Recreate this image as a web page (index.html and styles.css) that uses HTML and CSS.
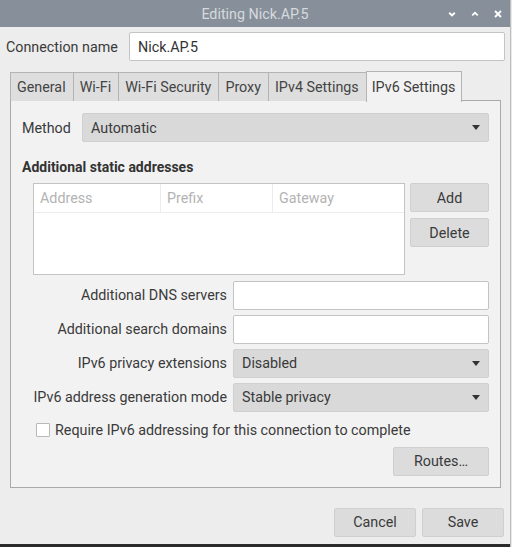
FILE: index.html
```html
<!DOCTYPE html>
<html>
<head>
<meta charset="utf-8">
<link rel="stylesheet" href="styles.css">
</head>
<body>
<div class="screen">
  <div class="window">
    <div class="titlebar">
      <span class="title">Editing Nick.AP.5</span>
      <div class="wm-buttons">
        <svg class="wm" viewBox="0 0 10 10"><path d="M2.2 3.8 L5 6.4 L7.8 3.8" fill="none" stroke="#fff" stroke-width="1.9"/></svg>
        <svg class="wm" viewBox="0 0 10 10"><path d="M2.2 6.4 L5 3.8 L7.8 6.4" fill="none" stroke="#fff" stroke-width="1.9"/></svg>
        <svg class="wm" viewBox="0 0 10 10"><path d="M2 2 L8 8 M8 2 L2 8" fill="none" stroke="#fff" stroke-width="1.9"/></svg>
      </div>
    </div>
    <div class="body">
      <div class="name-row">
        <span class="label">Connection name</span>
        <div class="entry name-entry">Nick.AP.5</div>
      </div>
      <div class="tabs">
        <div class="tab">General</div>
        <div class="tab">Wi-Fi</div>
        <div class="tab">Wi-Fi Security</div>
        <div class="tab">Proxy</div>
        <div class="tab">IPv4 Settings</div>
        <div class="tab active">IPv6 Settings</div>
      </div>
      <div class="panel">
        <div class="method-row">
          <span class="label">Method</span>
          <div class="combo method-combo"><span>Automatic</span><span class="arrow"></span></div>
        </div>
        <div class="heading">Additional static addresses</div>
        <div class="addr-row">
          <div class="table">
            <div class="thead">
              <div class="th c1">Address</div>
              <div class="th c2">Prefix</div>
              <div class="th c3">Gateway</div>
            </div>
          </div>
          <div class="side-buttons">
            <div class="button">Add</div>
            <div class="button">Delete</div>
          </div>
        </div>
        <div class="form">
          <span class="flabel">Additional DNS servers</span>
          <div class="entry"></div>
          <span class="flabel">Additional search domains</span>
          <div class="entry"></div>
          <span class="flabel">IPv6 privacy extensions</span>
          <div class="combo"><span>Disabled</span><span class="arrow"></span></div>
          <span class="flabel">IPv6 address generation mode</span>
          <div class="combo"><span>Stable privacy</span><span class="arrow"></span></div>
        </div>
        <div class="check-row">
          <span class="checkbox"></span>
          <span class="check-label">Require IPv6 addressing for this connection to complete</span>
        </div>
        <div class="routes-row">
          <div class="button routes">Routes…</div>
        </div>
      </div>
      <div class="dialog-buttons">
        <div class="button dlg">Cancel</div>
        <div class="button dlg">Save</div>
      </div>
    </div>
  </div>
  <div class="behind"></div>
</div>
</body>
</html>
```

FILE: styles.css
```css
* { box-sizing: border-box; }
html, body { margin: 0; padding: 0; }
body {
  width: 512px;
  height: 547px;
  overflow: hidden;
  background: #e6e6e6;
  font-family: Roboto, "Liberation Sans", sans-serif;
  font-size: 14.3px;
  color: #3a3a3a;
}
.screen { display: flex; height: 547px; }
.window {
  width: 510px;
  height: 547px;
  background: #ededed;
  border-bottom: 3px solid #2a2a2a;
  display: flex;
  flex-direction: column;
}
.behind {
  width: 2px;
  background: #e9e9e9;
  border-left: 1px solid #bdbdbd;
}
.titlebar {
  height: 27px;
  background: #87909a;
  position: relative;
  display: flex;
  align-items: center;
  justify-content: center;
}
.title {
  color: #d6dade;
  font-size: 14.3px;
}
.wm-buttons {
  position: absolute;
  right: 7px;
  top: 0;
  height: 27px;
  display: flex;
  align-items: center;
  gap: 13px;
}
.wm { width: 10px; height: 10px; display: block; }

.body {
  flex: 1;
  display: flex;
  flex-direction: column;
  padding: 5px 0 0 0;
}
.name-row {
  display: flex;
  align-items: center;
  padding-left: 6px;
  padding-right: 5px;
  height: 29px;
}
.name-row .label { width: 123px; white-space: nowrap; }
.entry {
  background: #fff;
  border: 1px solid #c4c4c4;
  border-radius: 2px;
  height: 29px;
  padding: 0 8px;
  display: flex;
  align-items: center;
  color: #333;
}
.name-entry { flex: 1; }

.tabs {
  display: flex;
  margin: 10px 0 0 10px;
  height: 30px;
  position: relative;
  z-index: 1;
}
.tab {
  height: 29px;
  margin-top: 1px;
  background: #dedede;
  border: 1px solid #b4b4b4;
  border-bottom: none;
  border-right: none;
  padding: 0 7px 0 6px;
  display: flex;
  align-items: center;
  color: #444;
  white-space: nowrap;
}
.tab.active {
  background: #f2f2f2;
  border-right: 1px solid #b4b4b4;
  height: 31px;
  margin-top: 0;
  padding: 0 6px 0 5px;
  color: #404040;
}
.panel {
  margin: -1px 9px 0 10px;
  background: #f2f2f2;
  border: 1px solid #a9a9a9;
  padding: 12px 11px 11px 11px;
  display: flex;
  flex-direction: column;
}
.method-row {
  display: flex;
  align-items: center;
  height: 29px;
}
.method-row .label { width: 60px; }
.combo {
  background: #d9d9d9;
  border: 1px solid #d0d0d0;
  border-radius: 2px;
  height: 29px;
  padding: 0 8px;
  display: flex;
  align-items: center;
  justify-content: space-between;
  color: #3a3a3a;
}
.method-combo { flex: 1; }
.arrow {
  width: 0;
  height: 0;
  border-left: 4.5px solid transparent;
  border-right: 4.5px solid transparent;
  border-top: 5px solid #333;
}
.heading {
  font-weight: bold;
  color: #333;
  margin-top: 16px;
  height: 19px;
  line-height: 19px;
  font-size: 14px;
}
.addr-row {
  display: flex;
  margin-top: 6px;
  padding-left: 11px;
  gap: 5px;
}
.table {
  width: 372px;
  height: 92px;
  background: #fff;
  border: 1px solid #c4c4c4;
}
.thead {
  display: flex;
  height: 29px;
  border-bottom: 1px solid #ececec;
}
.th {
  color: #b3b3b3;
  padding-left: 6px;
  display: flex;
  align-items: center;
  border-right: 1px solid #ececec;
}
.th.c1 { width: 127px; }
.th.c2 { width: 112px; }
.th.c3 { flex: 1; border-right: none; }
.side-buttons {
  display: flex;
  flex-direction: column;
  gap: 6px;
  width: 79px;
}
.button {
  background: #dcdcdc;
  border: 1px solid #cfcfcf;
  border-radius: 2px;
  height: 29px;
  display: flex;
  align-items: center;
  justify-content: center;
  color: #3a3a3a;
}
.form {
  display: grid;
  grid-template-columns: 1fr 256px;
  column-gap: 6px;
  row-gap: 5.5px;
  margin-top: 6px;
}
.flabel {
  text-align: right;
  align-self: center;
  white-space: nowrap;
  color: #3a3a3a;
}
.form .entry, .form .combo { height: 28.5px; }
.check-row {
  display: flex;
  align-items: center;
  margin-top: 8px;
  padding-left: 14px;
  height: 20px;
}
.checkbox {
  width: 14px;
  height: 14px;
  background: #fff;
  border: 1px solid #b9b9b9;
  border-radius: 1px;
  margin-right: 5px;
}
.check-label { color: #3a3a3a; }
.routes-row {
  display: flex;
  justify-content: flex-end;
  margin-top: 7px;
}
.routes { width: 96px; }
.dialog-buttons {
  display: flex;
  justify-content: flex-end;
  gap: 6px;
  margin-top: 20px;
  padding-right: 6px;
}
.dlg { width: 82px; }
```
